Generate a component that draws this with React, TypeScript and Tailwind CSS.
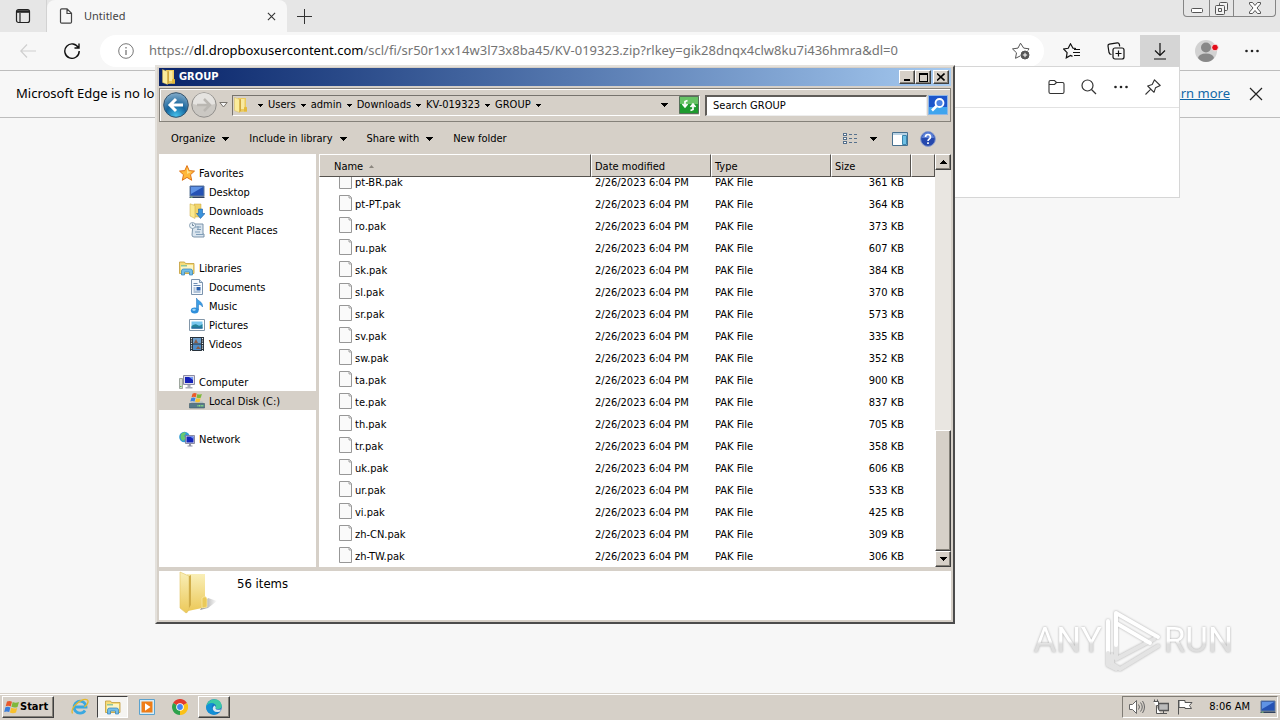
import type { ReactNode } from "react";

interface FileRow {
  name: string;
  size: string;
}

const files: FileRow[] = [
  { name: "pt-BR.pak", size: "361 KB" },
  { name: "pt-PT.pak", size: "364 KB" },
  { name: "ro.pak", size: "373 KB" },
  { name: "ru.pak", size: "607 KB" },
  { name: "sk.pak", size: "384 KB" },
  { name: "sl.pak", size: "370 KB" },
  { name: "sr.pak", size: "573 KB" },
  { name: "sv.pak", size: "335 KB" },
  { name: "sw.pak", size: "352 KB" },
  { name: "ta.pak", size: "900 KB" },
  { name: "te.pak", size: "837 KB" },
  { name: "th.pak", size: "705 KB" },
  { name: "tr.pak", size: "358 KB" },
  { name: "uk.pak", size: "606 KB" },
  { name: "ur.pak", size: "533 KB" },
  { name: "vi.pak", size: "425 KB" },
  { name: "zh-CN.pak", size: "309 KB" },
  { name: "zh-TW.pak", size: "306 KB" },
];

const crumbs = ["Users", "admin", "Downloads", "KV-019323", "GROUP"];

const raised = "border border-t-white border-l-white border-r-[#404040] border-b-[#404040] bg-[#d6d0c8] shadow-[inset_-1px_-1px_0_#848078]";

function Arrow({ className = "" }: { className?: string }) {
  return (
    <svg viewBox="0 0 7 4" className={`shrink-0 ${className}`} shapeRendering="crispEdges">
      <path d="M0 0h7L3.500 4z" />
    </svg>
  );
}

function Folder({ className }: { className: string }) {
  return (
    <svg viewBox="0 0 16 16" className={`shrink-0 ${className}`}>
      <path d="M5 1h8v9.500l1 1v3L5 15z" fill="#ecca5c" />
      <path d="M7 2h4.500v10H7z" fill="#f8e9a0" />
      <path d="M1.500.5 6.500 2.500v13L1.500 13.500z" fill="#fbec9b" stroke="#d3b04a" strokeWidth=".4" />
      <path d="M6.500 2.500v13l1.500-2V2z" fill="#cfa83f" />
      <path d="M11 10.500q2-1.500 3 0v4h-3z" fill="#e3b93a" />
    </svg>
  );
}

function LibraryIcon({ className }: { className: string }) {
  return (
    <svg viewBox="0 0 16 16" className={`shrink-0 ${className}`}>
      <path d="M.5 2h5l1 1.500h8.500v10H.5z" fill="#f6dc78" stroke="#c29b38" strokeWidth=".8" />
      <path d="M2 5h12v5H2z" fill="#fdf5c4" />
      <path d="M2 5h6v1.500H2z" fill="#8fc49a" />
      <path d="M2.500 15V11q0-2 2-2h7q2 0 2 2v4h-3v-3h-5v3z" fill="#73bde8" stroke="#2f83bb" strokeWidth=".7" />
    </svg>
  );
}

function StarIcon() {
  return (
    <svg viewBox="0 0 16 16" className="size-4 shrink-0">
      <path d="m8 .6 2.200 5 5.300.5-4 3.600 1.200 5.600L8 12.400l-4.700 2.900 1.200-5.600-4-3.600 5.300-.5z" fill="#ffb83a" stroke="#df7318" strokeWidth="1" />
      <path d="m8 3 1.500 3.500 3 .3L8 9z" fill="#ffe18a" />
    </svg>
  );
}

function DesktopIcon() {
  return (
    <svg viewBox="0 0 16 16" className="size-4 shrink-0">
      <path d="M1 2h14v10H1z" fill="#2452b4" stroke="#617b9b" />
      <path d="M2 3h12L2 10z" fill="#5f93e4" />
      <path d="M.5 12.500h15v1.500H.5z" fill="#30425f" />
      <path d="M1.500 12.700h2v1h-2z" fill="#8ad27b" />
    </svg>
  );
}

function DownloadsIcon() {
  return (
    <svg viewBox="0 0 16 16" className="size-4 shrink-0">
      <path d="M5 1h7v13H5z" fill="#f0d36b" stroke="#c9a63c" strokeWidth=".5" />
      <path d="M1 .8 6 2.500v13L1 13z" fill="#fae98f" stroke="#c9a63c" strokeWidth=".5" />
      <path d="M9.500 6h4v4.500H16L11.500 15.500 7.500 10.500h2z" fill="#3b93dc" stroke="#1c5ea5" strokeWidth=".6" />
    </svg>
  );
}

function RecentIcon() {
  return (
    <svg viewBox="0 0 16 16" className="size-4 shrink-0">
      <path d="M4 2h10v10h1v3H5q-2 0-2-2z" fill="#d9e4ee" stroke="#6f8ba3" strokeWidth=".9" />
      <path d="M6 5h6M8 7.500h4M6 10h5M7 12.500h7M9 4v4" stroke="#7f9db8" />
      <circle cx="3.500" cy="3.500" r="3" fill="#e9f2f8" stroke="#7690a6" strokeWidth=".8" />
      <path d="M3.500 1.500v2H5" stroke="#46637e" strokeWidth=".7" fill="none" />
    </svg>
  );
}

function DocumentIcon() {
  return (
    <svg viewBox="0 0 16 16" className="size-4 shrink-0">
      <path d="M2.500.5h8l3 3v12h-11z" fill="#f6fafe" stroke="#7b93ad" />
      <path d="M10.500.5v3h3" fill="#cfdeeb" stroke="#7b93ad" />
      <path d="M4.500 4.500h4M4.500 6.500h7M4.500 9h2M4.500 11h2M4.500 13h7" stroke="#6d8db3" />
      <path d="M7.500 8h4v3.500h-4z" fill="#2a61ad" />
    </svg>
  );
}

function MusicIcon() {
  return (
    <svg viewBox="0 0 16 16" className="size-4 shrink-0">
      <path d="M7.500 0c.5 3 6.500 3 6 9-1-2-2.500-2.500-4-2.500V12h-2z" fill="#3c9fe6" stroke="#1d6cb8" strokeWidth=".5" />
      <ellipse cx="5.700" cy="12.500" rx="3.900" ry="3" fill="#2f8fdb" />
      <ellipse cx="5" cy="11.800" rx="1.800" ry="1.100" fill="#9bd5f8" />
    </svg>
  );
}

function PicturesIcon() {
  return (
    <svg viewBox="0 0 16 16" className="size-4 shrink-0">
      <path d="M.5 2.500h15v11H.5z" fill="#fff" stroke="#8296a8" />
      <path d="M2.500 4.500h11v7h-11z" fill="#78c7ee" />
      <path d="M2.500 9q4-3 6-1t5-1v4.500h-11z" fill="#25839a" />
      <path d="M2.500 10.500h11v1h-11z" fill="#2b61a0" />
    </svg>
  );
}

function VideosIcon() {
  return (
    <svg viewBox="0 0 16 16" className="size-4 shrink-0">
      <path d="M1 1h14v14H1z" fill="#27313a" />
      <path d="M4 2h8v5.500H4z" fill="#6d9fcd" />
      <path d="M4 8.500h8V14H4z" fill="#4f8dc9" />
      <path d="m5 7 2-4 2 4zM7 13l2-3 3 3z" fill="#8b5c46" />
      <path d="M2.500 2v13M13.500 2v13" stroke="#e5ecef" strokeWidth="1.200" strokeDasharray="1.200 1.200" />
    </svg>
  );
}

function ComputerIcon() {
  return (
    <svg viewBox="0 0 16 16" className="size-4 shrink-0">
      <path d="M.5 4.500h3v10h-3z" fill="#d5d9cf" stroke="#7e8980" strokeWidth=".7" />
      <path d="M1 12h1.500v1H1z" fill="#57b84e" />
      <path d="M4.500 1.500h11v9h-11z" fill="#dcdcea" stroke="#8c8ca4" />
      <path d="M6 3h8v6H6z" fill="#1521b8" />
      <path d="M10 3h4v3z" fill="#7398f5" />
      <path d="M8.500 11h3v2h2v1.500h-7V13h2z" fill="#a9adb8" />
    </svg>
  );
}

function WindowsFlag({ className }: { className: string }) {
  return (
    <svg viewBox="0 0 16 14" className={`shrink-0 ${className}`}>
      <path d="M3 1.500Q5.500.2 8 1.700L6.700 6.500Q4.200 5 1.700 6.300z" fill="#e8592b" />
      <path d="M8.700 2Q11.500 3.500 15 2L13.500 7Q10.500 8.200 7.400 6.800z" fill="#7fb83b" />
      <path d="M1.400 7.200Q4 6 6.400 7.400L5.200 12Q2.800 10.800.2 12z" fill="#3a7edb" />
      <path d="M7.200 7.700Q10.300 9.200 13.200 8L12 12.500Q9 14 5.900 12.500z" fill="#f7c02d" />
    </svg>
  );
}

function DiskIcon() {
  return (
    <svg viewBox="0 0 16 16" className="size-4 shrink-0">
      <path d="M3 8.500h10.500l2 2.500H.7z" fill="#b4bdc2" />
      <path d="M.5 10.500h15V15H.5z" fill="#55798a" stroke="#3c5967" strokeWidth=".6" />
      <path d="M8.500 12.800h6" stroke="#8ff07f" strokeWidth="1.500" strokeDasharray="1 .6" />
      <path d="M3.500.8q2.300-1.300 4.200-.2L6.700 4.200q-2.200-1-4.200 0z" fill="#ec5b28" />
      <path d="M8.400.9q2.300 1.200 4.500.2l-1.100 3.700q-2.200.9-4.400-.2z" fill="#7fb93c" />
      <path d="M2.300 4.900q2.200-1 4.200 0L5.500 8.500q-2-1-4.200 0z" fill="#3c82de" />
      <path d="M7.200 5.200q2.200.9 4.400 0L10.600 9q-2.200.8-4.400-.2z" fill="#f8c32f" />
    </svg>
  );
}

function NetworkIcon() {
  return (
    <svg viewBox="0 0 16 16" className="size-4 shrink-0">
      <circle cx="5.500" cy="6" r="5.300" fill="#2f9ad5" />
      <path d="M2 3q3-3 5-1L5 5l2 2-3 3Q.5 8 2 3z" fill="#68c96f" />
      <path d="M6.500 4.500h9v8h-9z" fill="#dcdcea" stroke="#74748e" strokeWidth=".8" />
      <path d="M7.500 5.500h7v6h-7z" fill="#1426bb" />
      <path d="M11 5.500h3.500V8z" fill="#6c92f2" />
      <path d="M10 13h2v1.500h1.500v1h-5v-1H10z" fill="#8c90a3" />
    </svg>
  );
}

function PageIcon() {
  return (
    <svg viewBox="0 0 13 16" className="mb-1 h-4 w-[13px] shrink-0">
      <path d="M.5.500h10l2 2v13H.5z" fill="#fafafa" stroke="#979797" />
      <path d="M10 .5v2.500h2.500" fill="#e2e2e2" stroke="#a5a5a5" />
    </svg>
  );
}

interface NavEntry {
  label: string;
  icon: ReactNode;
  selected?: boolean;
}

const navGroups: { head: NavEntry; items: NavEntry[] }[] = [
  {
    head: { label: "Favorites", icon: <StarIcon /> },
    items: [
      { label: "Desktop", icon: <DesktopIcon /> },
      { label: "Downloads", icon: <DownloadsIcon /> },
      { label: "Recent Places", icon: <RecentIcon /> },
    ],
  },
  {
    head: { label: "Libraries", icon: <LibraryIcon className="size-4" /> },
    items: [
      { label: "Documents", icon: <DocumentIcon /> },
      { label: "Music", icon: <MusicIcon /> },
      { label: "Pictures", icon: <PicturesIcon /> },
      { label: "Videos", icon: <VideosIcon /> },
    ],
  },
  {
    head: { label: "Computer", icon: <ComputerIcon /> },
    items: [{ label: "Local Disk (C:)", icon: <DiskIcon />, selected: true }],
  },
  { head: { label: "Network", icon: <NetworkIcon /> }, items: [] },
];

function Dots() {
  return (
    <svg viewBox="0 0 16 16" className="size-4" fill="#222">
      <circle cx="2.500" cy="8" r="1.300" />
      <circle cx="8" cy="8" r="1.300" />
      <circle cx="13.500" cy="8" r="1.300" />
    </svg>
  );
}

function Browser() {
  return (
    <div className="relative flex flex-1 flex-col font-['Noto_Sans',sans-serif] text-[#1b1b1b]">
      <div className="flex h-8 items-stretch bg-[#e6e6e6]">
        <button aria-label="Tab actions" className="flex w-[47px] items-center justify-center border-r border-[#d2d2d2]">
          <svg viewBox="0 0 16 16" className="size-4" fill="none" stroke="#222" strokeWidth="1.200">
            <rect x="1.500" y="1.500" width="13" height="13" rx="2" />
            <path d="M2 3.500h12" strokeWidth="2.600" />
            <path d="M5 5v9" />
          </svg>
        </button>
        <div className="flex w-60 items-center rounded-t-lg bg-[#f7f7f7] pr-2 pl-3">
          <svg viewBox="0 0 14 16" className="h-4 w-[14px]" fill="none" stroke="#444" strokeWidth="1.200">
            <path d="M1.500 2q0-1.200 1.200-1.200H8L12.500 5.300V14q0 1.200-1.200 1.200H2.700Q1.500 15.200 1.500 14zM8 1v4.500h4.500" />
          </svg>
          <span className="ml-[11px] flex-1 text-[11px] text-[#444]">Untitled</span>
          <button aria-label="Close tab" className="flex size-4 items-center justify-center">
            <svg viewBox="0 0 10 10" className="size-[9px]" stroke="#333" strokeWidth="1.200">
              <path d="m1 1 8 8M9 1 1 9" />
            </svg>
          </button>
        </div>
        <button aria-label="New tab" className="flex w-[34px] items-center justify-center">
          <svg viewBox="0 0 15 15" className="size-[15px]" stroke="#333" shapeRendering="crispEdges">
            <path d="M7.500 0v15M0 7.500h15" />
          </svg>
        </button>
        <div className="mr-1 ml-auto flex h-[17px] rounded-b border border-t-0 border-[#858585]">
          <button aria-label="Minimize" className="flex w-[25px] items-center justify-center">
            <svg viewBox="0 0 12 12" className="mt-1 size-3" fill="#fff" stroke="#555">
              <rect x=".5" y="4.500" width="11" height="4" rx="1" />
            </svg>
          </button>
          <button aria-label="Restore" className="flex w-[25px] items-center justify-center border-x border-[#858585]">
            <svg viewBox="0 0 13 13" className="size-[13px]" fill="#f2f2f2" stroke="#555">
              <rect x="4.500" y=".5" width="8" height="8" rx="1" />
              <rect x=".5" y="3.500" width="9" height="9" rx="1" />
              <path d="M3.500 6.500h3v3h-3z" />
            </svg>
          </button>
          <button aria-label="Close" className="flex w-[41px] items-center justify-center">
            <svg viewBox="0 0 12 12" className="size-3" fill="#fff" stroke="#555">
              <path d="M.5.500h3L6 3.500 8.500.500h3V2L8 6l3.500 4v1.500h-3L6 8.500 3.500 11.500h-3V10L4 6 .5 2z" />
            </svg>
          </button>
        </div>
      </div>

      <div className="flex h-[39px] items-center border-b border-[#bdbdbd] bg-[#f7f7f7]">
        <button aria-label="Back" className="ml-5 flex size-4 items-center justify-center">
          <svg viewBox="0 0 16 16" className="size-4" fill="none" stroke="#cfcfcf" strokeWidth="1.200">
            <path d="M16 8H1M7 1.500.8 8 7 14.500" />
          </svg>
        </button>
        <button aria-label="Refresh" className="ml-7 flex size-4 items-center justify-center">
          <svg viewBox="0 0 16 16" className="size-4" fill="none" stroke="#111" strokeWidth="1.400">
            <path d="M14.500 5A7.200 7.200 0 1 0 15.200 8M15 .5V5h-4.500" />
          </svg>
        </button>
        <div className="ml-5 flex h-8 flex-1 items-center rounded-full bg-white pr-[14px] pl-[18px]">
          <svg viewBox="0 0 16 16" className="size-4 shrink-0" fill="none" stroke="#777">
            <circle cx="8" cy="8" r="7.300" />
            <path d="M8 7v5M8 4v1.500" strokeWidth="1.300" />
          </svg>
          <div className="ml-[15px] flex-1 text-[13px] whitespace-nowrap text-[#747474]">
            https://<span className="text-black">dl.dropboxusercontent.com</span>
            /scl/fi/sr50r1xx14w3l73x8ba45/KV-019323.zip?rlkey=gik28dnqx4clw8ku7i436hmra&amp;dl=0
          </div>
          <button aria-label="Add to favorites">
            <svg viewBox="0 0 18 18" className="size-[18px]" fill="none" stroke="#555">
              <path d="M16 8.500 17 6.800l-5.300-.7L8.500 1.200 6 6.100l-5.500.8 4 3.900-1 5.500 5-2.500" />
              <circle cx="13" cy="13" r="4" fill="#555" />
              <path d="M13 10.800v4.400M10.800 13h4.400" stroke="#fff" />
            </svg>
          </button>
        </div>
        <div className="ml-[19px] flex items-center">
          <button aria-label="Favorites">
            <svg viewBox="0 0 18 16" className="h-4 w-[18px]" fill="none" stroke="#111" strokeWidth="1.200">
              <path d="M13 5.500 10 5.200 7.500.8 5.200 5.300.6 6l3.500 3.600-.8 5.200 4.200-2.400 2 1M11 6.500h6M10 9.500h7M11 12.500h6" />
            </svg>
          </button>
          <button aria-label="Collections" className="ml-[26px]">
            <svg viewBox="0 0 18 18" className="size-[18px]" fill="none" stroke="#111" strokeWidth="1.200">
              <rect x="6" y="6" width="11" height="11" rx="2" />
              <path d="M11.500 8.500v6M8.500 11.500h6M4.500 12.500Q2.500 12.500 2 10.500L1 4Q.8 2.500 2.300 2.200l8-1.300q1.500-.2 2 1.300l.4 2.200" />
            </svg>
          </button>
          <button aria-label="Downloads" className="ml-[15px] flex h-8 w-10 items-center justify-center bg-[#d5d5d5]">
            <svg viewBox="0 0 14 17" className="h-[17px] w-[14px]" fill="none" stroke="#111" strokeWidth="1.200">
              <path d="M7 0v12M2 7.500l5 5 5-5M1 16h12" />
            </svg>
          </button>
          <button aria-label="Profile" className="ml-[15px] w-6">
            <svg viewBox="0 0 24 24" className="size-6">
              <circle cx="11" cy="12" r="11" fill="#d2d2d2" />
              <circle cx="11" cy="8.500" r="5" fill="#888" />
              <path d="M3 19q1-4.500 8-4.500t8 4.500Q16 23 11 23T3 19z" fill="#888" />
              <circle cx="20" cy="8.500" r="3.300" fill="#e30d19" stroke="#f7f7f7" strokeWidth=".8" />
            </svg>
          </button>
          <button aria-label="Settings and more" className="mr-5 ml-[25px]">
            <Dots />
          </button>
        </div>
      </div>

      <div className="flex h-[47px] items-center border-b border-[#bdbdbd] pr-[17px] pl-4">
        <p className="text-[13px] whitespace-nowrap text-black">Microsoft Edge is no longer</p>
        <a href="#" className="ml-auto text-[13px] text-[#1168a8] underline">
          Learn more
        </a>
        <button aria-label="Dismiss" className="ml-[19px]">
          <svg viewBox="0 0 14 14" className="size-[14px]" stroke="#222" strokeWidth="1.200">
            <path d="m1 1 12 12M13 1 1 13" />
          </svg>
        </button>
      </div>

      {/* downloads flyout, hangs from the toolbar button */}
      <div className="absolute top-[66px] right-[100px] w-[360px] border border-[#d6d6d6] bg-white">
        <div className="flex h-[41px] items-center justify-end border-b border-[#e2e2e2] pr-[18px]">
          <button aria-label="Open downloads folder">
            <svg viewBox="0 0 17 16" className="h-4 w-[17px]" fill="none" stroke="#333" strokeWidth="1.100">
              <path d="M1 3q0-1.500 1.500-1.500h4L8.500 3.500h6Q16 3.500 16 5v8q0 1.500-1.500 1.500h-12Q1 14.500 1 13zM1 5.500h5.500L8.500 3.500" />
            </svg>
          </button>
          <button aria-label="Search downloads" className="ml-4">
            <svg viewBox="0 0 16 16" className="size-4" fill="none" stroke="#333" strokeWidth="1.200">
              <circle cx="6.500" cy="6.500" r="5.500" />
              <path d="m10.500 10.500 4.500 4.500" />
            </svg>
          </button>
          <button aria-label="More options" className="ml-4">
            <Dots />
          </button>
          <button aria-label="Pin downloads" className="ml-4">
            <svg viewBox="0 0 16 16" className="size-4" fill="none" stroke="#333" strokeWidth="1.100" strokeLinejoin="round">
              <path d="M9.500.8 15.200 6.500 10.500 8.800 9 13.300 2.700 7 7.200 5.500zM5.800 10.200.5 15.500" />
            </svg>
          </button>
        </div>
        <div className="h-[89px]" />
      </div>

      <Watermark />
    </div>
  );
}

function Watermark() {
  const word = "bg-linear-to-b from-white from-50% to-[#dedede] to-55% bg-clip-text text-transparent";
  return (
    <div className="absolute right-[47px] bottom-5 flex items-center gap-[2px] font-['Roboto',sans-serif] text-[35px] leading-[60px] drop-shadow-[0_0_1px_#aaa]">
      <span className={word}>ANY</span>
      <svg viewBox="0 0 58 64" className="h-16 w-[58px]" fill="none" strokeWidth="4" strokeLinejoin="round" strokeLinecap="round">
        <path d="M8 46V55L16 60 54 37" stroke="#e4e4e4" />
        <path d="M12 4v46L50 30" stroke="#e4e4e4" />
        <path d="M12 36V4L54 28M12 14 46 34M4 44V12" stroke="#fff" />
        <path d="M4 44v12l8 4" stroke="#e4e4e4" />
      </svg>
      <span className={word}>RUN</span>
    </div>
  );
}

function MenuButton({ label, arrow = true }: { label: string; arrow?: boolean }) {
  return (
    <button className="flex items-center gap-[7px] whitespace-nowrap">
      {label}
      {arrow && <Arrow className="h-1 w-[7px]" />}
    </button>
  );
}

function NavRow({ entry, child = false }: { entry: NavEntry; child?: boolean }) {
  return (
    <li>
      <a
        href="#"
        className={`flex h-[19px] items-center gap-1 ${child ? "pl-[30px]" : "pl-5"} ${entry.selected ? "bg-[#d6d0c8]" : ""}`}
      >
        {entry.icon}
        <span className="pt-[2px]">{entry.label}</span>
      </a>
    </li>
  );
}

function HeadCell({ label, className = "pl-[3px]" }: { label: string; className?: string }) {
  return (
    <th scope="col" className="h-[17px] p-0 font-normal">
      <div
        className={`relative z-10 -mb-[6px] flex h-[23px] items-center border border-t-white border-l-white border-r-[#55524e] border-b-[#55524e] bg-[#d6d0c8] pt-[2px] ${className}`}
      >
        {label}
        {label === "Name" && (
          <svg viewBox="0 0 5 3" className="ml-[6px] h-[3px] w-[5px]" fill="#8b867e">
            <path d="M0 3h5L2.500 0z" />
          </svg>
        )}
      </div>
    </th>
  );
}

function Explorer() {
  return (
    <section
      aria-label="GROUP"
      className="absolute top-[65px] left-[155px] w-[800px] border-2 border-t-[#e4e1dc] border-l-[#e4e1dc] border-r-[#4c4c4c] border-b-[#4c4c4c] bg-[#d6d0c8] p-[2px] pt-[1px] font-['DejaVu_Sans_Condensed','Noto_Sans',sans-serif] text-[11px] leading-[14px] text-black"
    >
      <header className="flex h-[18px] items-center bg-linear-to-r from-[#0a246a] to-[#a6caf0] px-[2px]">
        <Folder className="size-4" />
        <h1 className="ml-[2px] flex-1 font-bold text-white">GROUP</h1>
        <button aria-label="Minimize" className={`flex h-[14px] w-4 items-end justify-center pb-[2px] ${raised}`}>
          <span className="h-[2px] w-[6px] bg-black" />
        </button>
        <button aria-label="Maximize" className={`flex h-[14px] w-4 items-center justify-center ${raised}`}>
          <span className="h-[9px] w-[9px] border border-t-2 border-black" />
        </button>
        <button aria-label="Close" className={`ml-[2px] flex h-[14px] w-4 items-center justify-center ${raised}`}>
          <svg viewBox="0 0 8 8" className="size-2" stroke="#000" strokeWidth="1.600">
            <path d="m0 .5 7.500 7M7.500.5 0 7.500" />
          </svg>
        </button>
      </header>

      <div className="mt-[2px] flex h-[34px] items-center border border-[#85817a] pr-[2px] pl-[3px] shadow-[inset_1px_1px_0_#fff]">
        <button aria-label="Back">
          <svg viewBox="0 0 26 26" className="size-[26px]">
            <defs>
              <radialGradient id="back" cx=".5" cy=".95" r=".9">
                <stop offset="0" stopColor="#45c3ee" />
                <stop offset=".5" stopColor="#17659d" />
                <stop offset="1" stopColor="#7ba6c6" />
              </radialGradient>
            </defs>
            <circle cx="13" cy="13" r="12.300" fill="url(#back)" stroke="#36536b" />
            <path d="M20 13H8M13 7l-6 6 6 6" fill="none" stroke="#fff" strokeWidth="3" />
          </svg>
        </button>
        <button aria-label="Forward" className="ml-[2px]">
          <svg viewBox="0 0 26 26" className="size-[26px]">
            <circle cx="13" cy="13" r="12.200" fill="#cbc8c3" stroke="#918f8c" />
            <path d="M2 12a11 11 0 0 1 22 0q-11 3-22 0z" fill="#e5e3e0" />
            <path d="M6 13h12M13 7l6 6-6 6" fill="none" stroke="#bab7b2" strokeWidth="2.500" />
          </svg>
        </button>
        <button aria-label="Recent pages" className="ml-[2px]">
          <svg viewBox="0 0 9 6" className="h-[6px] w-[9px]" fill="#f5f5f5" stroke="#77736d">
            <path d="M.8.5h7.400L4.500 5z" />
          </svg>
        </button>
        <nav aria-label="Address" className="ml-1 flex h-[21px] flex-1 items-center border border-t-[#77736d] border-l-[#77736d] border-r-white border-b-white">
          <Folder className="size-4" />
          <ol className="ml-[9px] flex flex-1 items-center">
            <li className="flex">
              <Arrow className="h-[3px] w-[5px]" />
            </li>
            {crumbs.map((crumb) => (
              <li key={crumb} className="ml-[5px] flex items-center gap-[5px]">
                <a href="#">{crumb}</a>
                <Arrow className="h-[3px] w-[5px]" />
              </li>
            ))}
          </ol>
          <button aria-label="Previous locations" className="mr-[11px]">
            <Arrow className="h-1 w-[7px]" />
          </button>
          <button aria-label="Refresh">
            <svg viewBox="0 0 20 18" className="h-[18px] w-5">
              <path d="M.5.500h19v17H.5z" fill="#1e9a2e" stroke="#56705a" />
              <path d="M1 1h18v7H1z" fill="#66c365" />
              <path d="M8.500 4.500 6 5.500v5M3.500 8 6 11l2.500-3M11.500 14.500l2.500-1v-5M11.500 11 14 8l2.500 3" fill="none" stroke="#fff" strokeWidth="1.700" />
            </svg>
          </button>
        </nav>
        <input
          type="text"
          aria-label="Search GROUP"
          placeholder="Search GROUP"
          className="ml-[5px] h-[21px] w-[222px] border border-t-2 border-l-2 border-t-[#5f5c58] border-l-[#5f5c58] border-r-[#eee] border-b-[#eee] bg-white pl-[6px] placeholder:text-black"
        />
        <button aria-label="Search" className="ml-[1px]">
          <svg viewBox="0 0 20 20" className="size-5">
            <path d="M.5.500h19v19H.5z" fill="#1c55cb" stroke="#8db7e8" />
            <path d="M1 12h18v7H1z" fill="#3fa5ee" />
            <circle cx="11.500" cy="8" r="4" fill="#4b82e3" stroke="#fff" strokeWidth="1.800" />
            <path d="m8.500 11-4.500 4.500" stroke="#fff" strokeWidth="2.600" />
          </svg>
        </button>
      </div>

      <div className="flex h-8 items-center gap-5 px-3 pt-[2px]">
        <MenuButton label="Organize" />
        <MenuButton label="Include in library" />
        <MenuButton label="Share with" />
        <MenuButton label="New folder" arrow={false} />
        <div className="mr-[3px] ml-auto flex items-center">
          <button aria-label="Change view" className="flex items-center gap-3">
            <svg viewBox="0 0 15 12" className="h-3 w-[15px]" fill="#fff" stroke="#56708c" shapeRendering="crispEdges">
              <path d="M.5.500h3v2h-3zM.5 4.500h3v2h-3zM.5 8.500h3v2h-3zM6 1.500h3M11 1.500h3M6 5.500h3M11 5.500h3M6 9.500h3M11 9.500h3" />
            </svg>
            <Arrow className="h-1 w-[7px]" />
          </button>
          <button aria-label="Preview pane" className="ml-[15px]">
            <svg viewBox="0 0 16 14" className="h-[14px] w-4">
              <path d="M.5.500h15v13H.5z" fill="#fff" stroke="#47708f" />
              <path d="M1 1h14v2H1z" fill="#b8d2e4" />
              <path d="M10.500 3.500h4v9h-4z" fill="#6fc0e5" stroke="#3b86ae" />
            </svg>
          </button>
          <button aria-label="Help" className="ml-3">
            <svg viewBox="0 0 16 16" className="size-4">
              <circle cx="8" cy="8" r="7.400" fill="#2548ad" stroke="#8b9dcd" />
              <path d="M2 7a6 6 0 0 1 12 0z" fill="#5c80d6" />
              <path d="M5.500 6q0-2.500 2.500-2.500T10.500 6q0 1.200-1.200 1.900T8 10M8 11.300v1.700" fill="none" stroke="#fff" strokeWidth="1.700" />
            </svg>
          </button>
        </div>
      </div>

      <div className="flex items-stretch">
        <nav aria-label="Folders" className="w-[157px] shrink-0 bg-white pt-[9px]">
          {navGroups.map((group) => (
            <ul key={group.head.label} className="mb-[19px]">
              <NavRow entry={group.head} />
              {group.items.map((item) => (
                <NavRow key={item.label} entry={item} child />
              ))}
            </ul>
          ))}
        </nav>
        <div className="ml-[3px] min-w-0 flex-1 bg-white">
          <table className="w-full table-fixed border-collapse text-left">
            <colgroup>
              <col />
              <col className="w-[120px]" />
              <col className="w-[120px]" />
              <col className="w-20" />
              <col className="w-6" />
            </colgroup>
            <thead>
              <tr>
                <HeadCell label="Name" className="pl-[14px]" />
                <HeadCell label="Date modified" />
                <HeadCell label="Type" />
                <HeadCell label="Size" />
                <HeadCell label="" />
              </tr>
            </thead>
            <tbody>
              {files.map((file) => (
                <tr key={file.name} className="h-[22px]">
                  <td className="p-0 pt-[2px] pl-5">
                    <span className="flex items-center gap-[3px]">
                      <PageIcon />
                      {file.name}
                    </span>
                  </td>
                  <td className="p-0 pt-[2px] pl-1 whitespace-nowrap">2/26/2023 6:04 PM</td>
                  <td className="p-0 pt-[2px] pl-1">PAK File</td>
                  <td className="p-0 pt-[2px] pr-[7px] text-right">{file.size}</td>
                  <td className="p-0" />
                </tr>
              ))}
            </tbody>
          </table>
        </div>
        <div className="flex w-4 flex-col bg-[#e9e6e1]">
          <button aria-label="Scroll up" className={`flex h-4 items-center justify-center ${raised}`}>
            <Arrow className="h-1 w-[7px] rotate-180" />
          </button>
          <div className="flex-1" />
          <div className={`h-[121px] ${raised}`} />
          <button aria-label="Scroll down" className={`flex h-4 items-center justify-center ${raised}`}>
            <Arrow className="h-1 w-[7px]" />
          </button>
        </div>
      </div>

      <footer className="mt-1 flex h-[49px] items-start bg-white pl-[19px]">
        <svg viewBox="0 0 40 44" className="h-11 w-10">
          <defs>
            <linearGradient id="fold" x1="0" y1="0" x2="0" y2="1">
              <stop offset="0" stopColor="#f9efb8" />
              <stop offset="1" stopColor="#ecc95a" />
            </linearGradient>
            <linearGradient id="shade" x1="0" y1="0" x2="1" y2="0">
              <stop offset="0" stopColor="#8d8d8d" />
              <stop offset="1" stopColor="#ffffff" />
            </linearGradient>
          </defs>
          <path d="M22 39 30 27l9 3-9 7z" fill="url(#shade)" />
          <path d="M9 3h18v22l2 3v8L10 40z" fill="url(#fold)" />
          <path d="M2 1 11 5v32q-1 5-3 5L2 37z" fill="url(#fold)" stroke="#e3c463" strokeWidth=".6" />
          <path d="M11 5v32l2-3V4z" fill="#d0ad49" />
          <path d="M24 27q4-3 5 1v8l-5 1z" fill="#eac95a" stroke="#fbf0b5" strokeWidth=".6" />
        </svg>
        <p className="mt-[5px] ml-[19px] text-[13px] leading-4">56 items</p>
      </footer>
    </section>
  );
}

function Taskbar() {
  return (
    <footer className="relative flex h-[27px] items-center border-t border-[#d6d0c8] bg-[#d6d0c8] px-[2px] font-['DejaVu_Sans_Condensed','Noto_Sans',sans-serif] text-[11px] text-black shadow-[inset_0_1px_0_#fff]">
      <button className={`flex h-[22px] w-[52px] items-center pl-[1px] font-bold ${raised}`}>
        <WindowsFlag className="h-[14px] w-4" />
        Start
      </button>
      <button aria-label="Internet Explorer" className="ml-[17px]">
        <svg viewBox="0 0 18 18" className="size-[18px]" fill="none">
          <path d="M14 12.500A6 6 0 1 1 15 9H4" stroke="#3aa8e0" strokeWidth="2.800" />
          <path d="M1.500 15.500Q-.5 11 6 5.500T16.500 2q2 3-3 7" stroke="#e5b82d" strokeWidth="1.300" />
        </svg>
      </button>
      <button
        aria-label="Windows Explorer"
        className="ml-2 flex h-[22px] w-[31px] items-center justify-center border border-t-[#404040] border-l-[#404040] border-r-white border-b-white bg-[#f5f4f1]"
      >
        <LibraryIcon className="size-4" />
      </button>
      <button aria-label="Media Player" className="ml-[11px]">
        <svg viewBox="0 0 16 16" className="size-4">
          <path d="M.5.500h15v15H.5z" fill="#d7edf8" stroke="#5ba2ce" />
          <path d="M2.500 2.500h11v11h-11z" fill="#ef7d17" />
          <path d="M6 4.200 11.500 8 6 11.800z" fill="#fff" />
        </svg>
      </button>
      <button aria-label="Chrome" className="ml-[17px]">
        <svg viewBox="0 0 16 16" className="size-4">
          <path d="M8 8 1.100 4A8 8 0 0 1 15 4z" fill="#e33b2e" />
          <path d="M8 8 15 4a8 8 0 0 1-7 12z" fill="#fbc116" />
          <path d="M8 8v8A8 8 0 0 1 1.100 4z" fill="#2da24c" />
          <circle cx="8" cy="8" r="3.800" fill="#fff" />
          <circle cx="8" cy="8" r="2.900" fill="#4285f4" />
        </svg>
      </button>
      <button aria-label="Edge" className={`ml-[10px] flex h-[22px] w-8 items-center justify-center ${raised}`}>
        <svg viewBox="0 0 16 16" className="size-4">
          <circle cx="8" cy="8" r="7.800" fill="#1674c4" />
          <path d="M.3 7Q2 .2 8.500.2T15.800 7q-.3 3.500-4.500 3-2.500-.4-1.500-2Q10.500 5 7 4.500T.3 8z" fill="#3cc9a5" />
          <path d="M.3 7Q3 2.500 8 4.500q-3 1.500-2 5t6 4.500Q8.500 17 4 14.500T.3 7z" fill="#1290d6" />
          <path d="M8.500 6.500Q5.500 9 7.500 11.500t6.500 1l1-2q-5 1-5.500-1 1-1.500-1-3z" fill="#d8e9f3" />
        </svg>
      </button>

      <div className="ml-auto flex h-[22px] items-center border border-t-[#807c75] border-l-[#807c75] border-r-white border-b-white pr-[1px] pl-[6px]">
        <svg viewBox="0 0 16 16" className="size-4" fill="none" stroke="#666">
          <path d="M.5 5.500h3l4-4v13l-4-4h-3z" fill="#fff" />
          <path d="M9.500 5.500q2 2.500 0 5M11.500 3.500q3.500 4.500 0 9M13.500 2q4 6 0 12" />
        </svg>
        <svg viewBox="0 0 16 16" className="ml-2 size-4" fill="#fff" stroke="#555">
          <path d="M5.500 4.500h10v7h-10z" fill="#bbb" strokeWidth="1.500" />
          <path d="M.5 2.500h5v4h-2v8h4M1.500.5v2M4.500.5v2M7 14.500h7M10.500 12v2" />
        </svg>
        <svg viewBox="0 0 16 16" className="ml-2 size-4" fill="#fff" stroke="#555">
          <path d="M1.500 1v14.500M2 1.500h6v2h7l-2.500 3 2 3H8v-1H2z" />
        </svg>
        <time className="ml-4 whitespace-nowrap">8:06 AM</time>
        <button aria-label="Show desktop" className="ml-[10px]">
          <DesktopIcon />
        </button>
      </div>
    </footer>
  );
}

export default function App() {
  return (
    <main className="relative flex min-h-screen flex-col overflow-hidden bg-[#f7f7f7]">
      <Browser />
      <Taskbar />
      <Explorer />
    </main>
  );
}
